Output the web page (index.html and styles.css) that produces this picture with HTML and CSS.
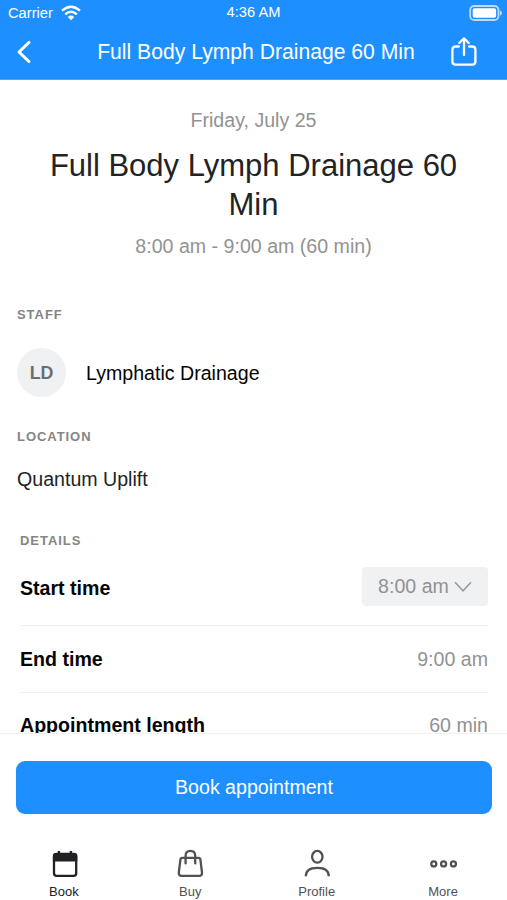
FILE: index.html
```html
<!DOCTYPE html>
<html lang="en">
<head>
<meta charset="utf-8">
<title>Full Body Lymph Drainage 60 Min</title>
<link rel="stylesheet" href="styles.css">
</head>
<body>
<div class="app">
  <header class="header">
    <div class="status">
      <div class="carrier">Carrier
        <svg width="20" height="16" viewBox="0 0 20 16" fill="none" stroke="#fff" stroke-width="2.3"><path d="M1 5.7Q10-2.1 19 5.7"/><path d="M4.2 9.3Q10 4.2 15.8 9.3"/><path d="M10 15.2L6.7 11.9Q10 9.1 13.3 11.9Z" fill="#fff" stroke="none"/></svg>
      </div>
      <div class="clock">4:36 AM</div>
      <svg class="battery" width="34" height="16" viewBox="0 0 34 16"><rect x="1.2" y="1" width="28.3" height="14" rx="4" fill="none" stroke="#b9dcff" stroke-width="1.8"/><rect x="3.7" y="3.3" width="23.4" height="9.4" rx="1.8" fill="#fff"/><path d="M31 5.5Q33 6 33 8T31 10.5Z" fill="#b9dcff"/></svg>
    </div>
    <div class="navbar">
      <svg width="16" height="24" viewBox="0 0 16 24" fill="none" stroke="#fff" stroke-width="2.9" stroke-linecap="round" stroke-linejoin="round"><path d="M13 2.4L3 12L13 21.6"/></svg>
      <div class="nav-title">Full Body Lymph Drainage 60 Min</div>
      <svg width="28" height="32" viewBox="0 0 28 32" fill="none" stroke="#fff" stroke-width="2.3" stroke-linecap="round" stroke-linejoin="round"><path d="M9 10.5H5.6Q2.4 10.5 2.4 13.7V25.5Q2.4 28.7 5.6 28.7H22.2Q25.4 28.7 25.4 25.5V13.7Q25.4 10.5 22.2 10.5H19"/><path d="M14 19V2.6M9.3 7L14 2.4L18.7 7"/></svg>
    </div>
  </header>
  <main class="content">
    <section class="summary">
      <div class="date">Friday, July 25</div>
      <h1>Full Body Lymph Drainage 60 Min</h1>
      <div class="range">8:00 am - 9:00 am (60 min)</div>
    </section>
    <section class="staff">
      <h2>STAFF</h2>
      <div class="person"><div class="avatar">LD</div><div>Lymphatic Drainage</div></div>
    </section>
    <section class="location">
      <h2>LOCATION</h2>
      <div class="place">Quantum Uplift</div>
    </section>
    <section class="details">
      <h2>DETAILS</h2>
      <div class="row start"><b>Start time</b>
        <div class="select">8:00 am
          <svg width="18" height="12" viewBox="0 0 18 12" fill="none" stroke="#97999b" stroke-width="1.5"><path d="M1 2.3L9 10.8L17 2.3"/></svg>
        </div>
      </div>
      <div class="row"><b>End time</b><span>9:00 am</span></div>
      <div class="row last"><b>Appointment length</b><span>60 min</span></div>
    </section>
  </main>
  <div class="action"><button>Book appointment</button></div>
  <nav class="tabs">
    <div class="tab active">
      <svg width="28" height="30" viewBox="0 0 28 30"><path d="M8.9 2V6M20.9 2V6" stroke="#202124" stroke-width="2.4"/><rect x="4" y="5" width="22.2" height="21.8" rx="2.6" fill="none" stroke="#202124" stroke-width="2.3"/><path d="M2.9 7Q2.9 4 5.9 4H24.3Q27.3 4 27.3 7V12.5H2.9Z" fill="#202124"/></svg>
      Book</div>
    <div class="tab">
      <svg width="28" height="30" viewBox="0 0 28 30" fill="none" stroke="#505153" stroke-width="2.3" stroke-linecap="round"><path d="M6.4 8.8H22.4Q24.2 8.8 24.4 10.6L26 23.5Q26.3 26.8 23.2 26.8H5.6Q2.5 26.8 2.8 23.5L4.4 10.6Q4.6 8.8 6.4 8.8ZM9.6 14.4V6.7Q9.6 1.8 14.4 1.8T19.2 6.7V14.4"/></svg>
      Buy</div>
    <div class="tab">
      <svg width="28" height="30" viewBox="0 0 28 30" fill="none" stroke="#505153" stroke-width="2.3"><ellipse cx="14.3" cy="7.8" rx="5.2" ry="5.9"/><path d="M2.8 27.3C2.8 21.3 7.3 18.8 14.3 18.8S25.8 21.3 25.8 27.3"/></svg>
      Profile</div>
    <div class="tab">
      <svg width="28" height="30" viewBox="0 0 28 30" fill="none" stroke="#505153" stroke-width="2.3"><circle cx="4.8" cy="14.9" r="2.5"/><circle cx="14.6" cy="14.9" r="2.5"/><circle cx="24.4" cy="14.9" r="2.5"/></svg>
      More</div>
  </nav>
</div>
</body>
</html>
```
FILE: styles.css
```css
* { box-sizing: border-box; }
body {
  margin: 0;
  background: #fff;
  color: #222325;
  font-family: "Liberation Sans", Arial, sans-serif;
  font-size: 19.6px;
  line-height: 24px;
}
svg { display: block; flex: none; }
.app { height: 900px; display: flex; flex-direction: column; overflow: hidden; }

.header { height: 80px; flex: none; background: #1e8fff; color: #fff; border-bottom: 1px solid #4ca5fb; }
.status {
  height: 25px;
  padding: 0 4px 0 8px;
  display: grid;
  grid-template-columns: 1fr auto 1fr;
  align-items: center;
  font-size: 14.7px;
}
.carrier { display: flex; align-items: center; gap: 8px; }
.clock { padding-right: 4px; line-height: 22px; margin-top: -1px; }
.battery { justify-self: end; }
.navbar {
  height: 54px;
  padding: 0 29px 0 16px;
  display: flex;
  align-items: center;
  justify-content: space-between;
}
.nav-title { font-size: 21.15px; padding-left: 30px; }

.content { height: 653px; flex: none; overflow: hidden; }
.summary { padding: 28px 40px 0; text-align: center; color: #929292; }
h1 { margin: 14px 0 10px; font-size: 31px; line-height: 39px; font-weight: 400; color: #222325; }
h2 { margin: 0; font-size: 13px; line-height: 16px; letter-spacing: .95px; color: #858585; }
.staff { padding: 49px 17px 0; }
.person { display: flex; align-items: center; gap: 20px; margin-top: 25px; color: #050505; }
.avatar {
  width: 49px;
  height: 49px;
  border-radius: 50%;
  background: #f0f1f3;
  color: #6b6d71;
  font-size: 17.8px;
  font-weight: 700;
  display: flex;
  align-items: center;
  justify-content: center;
}
.location { padding: 32px 17px 0; }
.place { margin-top: 22px; }
.details { padding: 42px 19px 0 20px; }
.row {
  height: 67px;
  display: flex;
  align-items: center;
  justify-content: space-between;
  border-bottom: 1px solid #f0f0f0;
  color: #929292;
}
.row b { color: #050505; }
.start { height: 59px; margin-top: 18px; align-items: flex-start; }
.start b { margin-top: 9px; }
.last { height: 64px; border: 0; }
.select {
  width: 126px;
  height: 39px;
  padding-bottom: 1px;
  background: #f0f1f3;
  border-radius: 4px;
  display: flex;
  align-items: center;
  justify-content: center;
  gap: 5px;
}

.action { height: 90px; flex: none; padding: 27px 15px 0 16px; border-top: 1px solid #f0f0f0; }
button {
  display: block;
  width: 100%;
  height: 53px;
  padding: 0 0 2px;
  border: 0;
  border-radius: 9px;
  background: #1e8fff;
  color: #fff;
  font: inherit;
}
.tabs { display: grid; grid-template-columns: repeat(4, 126.4px); justify-content: center; padding-top: 26px; }
.tab { display: flex; flex-direction: column; align-items: center; font-size: 13px; line-height: 16px; gap: 5px; color: #505153; }
.active { color: #202124; }
```
